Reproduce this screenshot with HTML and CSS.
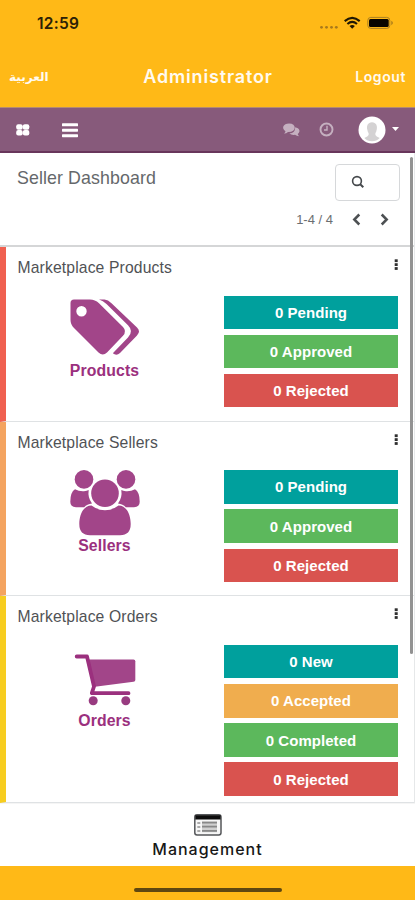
FILE: index.html
```html
<!DOCTYPE html>
<html lang="en">
<head>
<meta charset="utf-8">
<meta name="viewport" content="width=device-width">
<title>Seller Dashboard</title>
<link rel="stylesheet" href="styles.css">
</head>
<body>
<div class="app">
  <div class="status">
    <span class="time">12:59</span>
    <svg class="status-icons" width="76" height="16" viewBox="0 0 76 16">
      <g fill="#a8791c"><circle cx="2.5" cy="12.3" r="1.4"/><circle cx="7.5" cy="12.3" r="1.4"/><circle cx="12.5" cy="12.3" r="1.4"/><circle cx="17.3" cy="12.3" r="1.4"/></g>
      <g fill="none" stroke="#201804" stroke-width="2.1"><path d="M25.7 6.1Q33.2-.5 40.7 6.1"/><path d="M28.4 9Q33.2 4.8 38 9"/></g>
      <path d="M30.5 11Q33.2 8.8 35.9 11L33.2 13.8Z" fill="#201804"/>
      <rect x="48.8" y="2.4" width="22" height="11" rx="3" fill="none" stroke="#aa8023"/>
      <rect x="50" y="4" width="19.7" height="8" rx="1.5" fill="#080500"/>
      <path d="M72.3 5.8Q75.5 8 72.3 10.2Z" fill="#a87b1b"/>
    </svg>
  </div>
  <header class="header">
    <span class="lang" lang="ar" dir="rtl">العربية</span>
    <h1>Administrator</h1>
    <span class="logout">Logout</span>
  </header>
  <nav class="nav">
    <svg class="grid-icon" width="14" height="12" viewBox="0 0 14 12" fill="#fff"><rect x=".2" y=".2" width="6.5" height="5.5" rx="2"/><rect x="6.8" y=".2" width="6.5" height="5.5" rx="2"/><rect x=".2" y="6" width="6.5" height="5.5" rx="2"/><rect x="6.8" y="6" width="6.5" height="5.5" rx="2"/></svg>
    <svg class="menu-icon" width="16" height="15" viewBox="0 0 16 15" fill="#fff"><rect y=".3" width="16" height="3" rx=".6"/><rect y="5.7" width="16" height="3" rx=".6"/><rect y="11.2" width="16" height="3" rx=".6"/></svg>
    <svg class="chat-icon" width="17" height="14" viewBox="0 0 17 14" fill="#c5b0c0"><path d="M12.2 4.3C16.5 5 18 8.5 14.7 10.9Q15 12.3 16.2 13.2Q13.8 13.2 12 11.8Q8.5 12.3 6.4 10.5Q12.3 10 12.2 4.3Z"/><path d="M6 .5C14 .5 13.7 9.4 5 9.1Q3.2 10.7 1 10.6Q2.3 9.6 2.5 8.2C-1.9 5.5.2.5 6 .5Z"/></svg>
    <svg class="clock-icon" width="15" height="15" viewBox="0 0 15 15" fill="none" stroke="#c5b0c0"><circle cx="7.5" cy="7.5" r="6" stroke-width="1.9"/><path d="M8 3.8V8H5" stroke-width="1.4"/></svg>
    <svg class="avatar" width="28" height="28" viewBox="0 0 28 28"><circle cx="14" cy="14" r="13.5" fill="#fff"/><path d="M14 6.2C18.3 6.2 19.5 10 18.8 13.3Q18.3 16.2 17.4 17V19Q18 20.3 21.7 22Q18.5 25.3 14 25.3T6.3 22Q10 20.3 10.6 19V17Q9.7 16.2 9.2 13.3C8.5 10 9.7 6.2 14 6.2Z" fill="#d4d2d3"/></svg>
    <svg class="caret" width="7" height="4" viewBox="0 0 7 4" fill="#fff"><path d="M0 0H7L3.5 4Z"/></svg>
  </nav>
  <main class="content">
    <section class="panel">
      <h2>Seller Dashboard</h2>
      <div class="tools">
        <div class="search"><svg width="14" height="14" viewBox="0 0 14 14" fill="none" stroke="#45494c"><circle cx="6" cy="6" r="4.4" stroke-width="1.6"/><path d="M9.2 9.2L12.3 12.2" stroke-width="2"/></svg></div>
        <div class="pager"><span>1-4 / 4</span>
          <svg width="9" height="13" viewBox="0 0 9 13" fill="none" stroke="#4d5053" stroke-width="2.5"><path d="M7.3 1.5L2.3 6.5L7.3 11.5"/></svg>
          <svg width="9" height="13" viewBox="0 0 9 13" fill="none" stroke="#4d5053" stroke-width="2.5"><path d="M1.7 1.5L6.7 6.5L1.7 11.5"/></svg>
        </div>
      </div>
    </section>
    <section class="card red-edge">
      <div class="card-head"><h3>Marketplace Products</h3><svg class="dots" width="4" height="12" viewBox="0 0 4 12" fill="#303030"><rect x=".7" y=".3" width="3" height="2.8"/><rect x=".7" y="4.2" width="3" height="2.8"/><rect x=".7" y="8.1" width="3" height="2.8"/></svg></div>
      <div class="card-body">
        <div class="kind">
          <svg width="70" height="70" viewBox="0 0 70 70" fill="#a24589"><path fill-rule="evenodd" d="M4 .5H20Q25 .5 29 4.2L53 28Q57 32.3 53 36.7L37 53.5Q32.8 57.3 28.5 53.5L4 29Q.5 25.5.5 21V4Q.5.5 4 .5ZM11.5 7A5.2 5.2 0 1 0 11.5 17.4A5.2 5.2 0 1 0 11.5 7Z"/><path d="M29 .5H34.5Q38 .7 41.5 4.2L67 28.5Q71 32.3 67 36.5L50 54Q46.5 57.3 42.8 54.3L58 38.5Q64 32.3 58 26.3L36.5 5Q33 1.6 29 .5Z"/></svg>
          <strong>Products</strong>
        </div>
        <div class="actions"><a class="btn teal">0 Pending</a><a class="btn green">0 Approved</a><a class="btn red">0 Rejected</a></div>
      </div>
    </section>
    <section class="card orange-edge">
      <div class="card-head"><h3>Marketplace Sellers</h3><svg class="dots" width="4" height="12" viewBox="0 0 4 12" fill="#303030"><rect x=".7" y=".3" width="3" height="2.8"/><rect x=".7" y="4.2" width="3" height="2.8"/><rect x=".7" y="8.1" width="3" height="2.8"/></svg></div>
      <div class="card-body">
        <div class="kind">
          <svg width="70" height="66" viewBox="0 4 70 66" fill="#a24589"><circle cx="14" cy="13.4" r="9.3"/><circle cx="56" cy="13.4" r="9.3"/><circle cx="35" cy="27.2" r="13.8"/><path d="M5 23.2Q9 25.5 14 25.2Q17 25 18.7 24Q17.5 31.5 22 37.5Q17 38 14.2 41.2H6Q.3 41.2.3 35.8Q.3 26 5 23.2Z"/><path d="M65 23.2Q61 25.5 56 25.2Q53 25 51.3 24Q52.5 31.5 48 37.5Q53 38 55.8 41.2H64Q69.7 41.2 69.7 35.8Q69.7 26 65 23.2Z"/><path d="M21.5 39.5Q27 44.2 35 44.2T48.5 39.5C57 39.5 60.7 49.3 60.7 58Q60.7 69.2 50 69.2H20Q9.3 69.2 9.3 58C9.3 49.3 13 39.5 21.5 39.5Z"/></svg>
          <strong>Sellers</strong>
        </div>
        <div class="actions"><a class="btn teal">0 Pending</a><a class="btn green">0 Approved</a><a class="btn red">0 Rejected</a></div>
      </div>
    </section>
    <section class="card yellow-edge">
      <div class="card-head"><h3>Marketplace Orders</h3><svg class="dots" width="4" height="12" viewBox="0 0 4 12" fill="#303030"><rect x=".7" y=".3" width="3" height="2.8"/><rect x=".7" y="4.2" width="3" height="2.8"/><rect x=".7" y="8.1" width="3" height="2.8"/></svg></div>
      <div class="card-body">
        <div class="kind">
          <svg width="70" height="70" viewBox="0 2 70 70"><path d="M17 13.5H63.5Q65.3 13.5 65.3 15.3V34Q65.3 35.5 63.5 35.8L23 41Z" fill="#a24589"/><path d="M6.7 10.5H17L24 40.5L21.8 47.2H58.5" fill="none" stroke="#9b307e" stroke-width="3.8" stroke-linecap="round" stroke-linejoin="round"/><circle cx="23.2" cy="54.7" r="4.5" fill="#983b80"/><circle cx="55.8" cy="54.7" r="4.5" fill="#983b80"/></svg>
          <strong>Orders</strong>
        </div>
        <div class="actions"><a class="btn teal">0 New</a><a class="btn amber">0 Accepted</a><a class="btn green">0 Completed</a><a class="btn red">0 Rejected</a></div>
      </div>
    </section>
    <div class="scrollbar"></div>
  </main>
  <footer class="tabbar">
    <svg width="28" height="22" viewBox="0 0 28 22"><rect x=".8" y=".8" width="26.2" height="20.2" rx="2.2" fill="#f7f7f7" stroke="#55575a" stroke-width="1.5"/><path d="M1.3 1.2H26.6V5.5H1.3Z" fill="#0d0d0d"/><g fill="#aaa"><rect x="3.3" y="8" width="3" height="2"/><rect x="3.3" y="12" width="3" height="2"/><rect x="3.3" y="16" width="3" height="2"/></g><g fill="#888"><rect x="8" y="7.5" width="15" height="10.7" opacity=".35"/><rect x="8" y="7.7" width="15" height="1.8"/><rect x="8" y="11.7" width="15" height="1.8"/><rect x="8" y="16" width="15" height="1.8"/></g></svg>
    <span>Management</span>
  </footer>
  <div class="home"><div class="home-bar"></div></div>
</div>
</body>
</html>
```
FILE: styles.css
```css
* { box-sizing: border-box; }
body { margin: 0; background: #fff; font-family: "Liberation Sans", Arial, sans-serif; }
h1, h2, h3 { margin: 0; font-weight: 400; white-space: nowrap; }
svg { display: block; flex: none; overflow: visible; }
.app { width: 415px; height: 900px; display: flex; flex-direction: column; overflow: hidden; }

.status { height: 46px; flex: none; background: #ffb917; display: flex; justify-content: space-between; padding: 15px 20px 0 37px; }
.time { font: 600 15.5px/17px Inter, sans-serif; color: #2c2106; letter-spacing: .3px; }
.header { height: 61px; flex: none; background: #ffb917; color: #fffaf0; display: grid; grid-template-columns: 90px 1fr 90px; align-items: center; padding: 0 9px; font-family: Inter, sans-serif; }
.lang { justify-self: start; font: 700 12px/20px "DejaVu Sans", sans-serif; }
.header h1 { justify-self: center; font-size: 18px; font-weight: 600; letter-spacing: .85px; padding-left: 1px; }
.logout { justify-self: end; font-size: 14px; font-weight: 600; letter-spacing: .6px; }

.nav { height: 46px; flex: none; background: #875a7b; border-top: 1px solid #b58b70; border-bottom: 2px solid #68365b; display: flex; align-items: center; padding: 0 16px; }
.menu-icon { margin-left: 32px; margin-top: 1px; }
.chat-icon { margin-left: 205px; }
.clock-icon { margin-left: 18.5px; }
.avatar { margin-left: 24.5px; }
.caret { margin-left: 6px; margin-top: -2px; }

.content { height: 650px; flex: none; position: relative; border-right: 1px solid #e6e8e9; }
.panel { height: 94px; border-bottom: 2px solid #d5d6d7; display: flex; justify-content: space-between; padding: 11px 14px 0 17px; }
.panel h2 { font-size: 17.8px; line-height: 28px; color: #65686b; letter-spacing: .1px; }
.tools { display: flex; flex-direction: column; align-items: flex-end; }
.search { width: 65px; height: 37px; border: 1px solid #d6d8da; border-radius: 4px; padding: 10px 0 0 15px; }
.pager { display: flex; align-items: center; height: 37px; padding-right: 11px; color: #6b6e71; font-size: 13px; }
.pager svg:first-of-type { margin: 0 19px 0 19px; }

.card { height: 174.7px; border-left: 6px solid; border-bottom: 1.5px solid #dfe2e4; padding: 9px 16px 0 11.5px; }
.red-edge { border-left-color: #f06050; }
.orange-edge { border-left-color: #f4a460; }
.yellow-edge { border-left-color: #f7cd1f; height: 206.6px; }
.card-head { display: flex; justify-content: space-between; height: 39.5px; }
.card-head h3 { font-size: 15.7px; line-height: 23.4px; color: #505255; letter-spacing: .14px; }
.dots { margin-top: 3px; }
.card-body { display: flex; justify-content: space-between; }
.kind { width: 174px; display: flex; flex-direction: column; align-items: center; padding-top: 3.5px; }
.kind strong { font-size: 15.8px; line-height: 18px; color: #9b307e; margin-top: -6.3px; letter-spacing: .1px; }
.red-edge .kind strong { margin-top: -7.3px; }
.orange-edge .kind { padding-top: 0; }
.orange-edge .kind strong { margin-top: 1px; }
.actions { width: 174px; flex: none; display: flex; flex-direction: column; gap: 5.6px; }
.btn { height: 33.6px; display: flex; align-items: center; justify-content: center; color: #fff; font-size: 15px; font-weight: 700; letter-spacing: .05px; }
.teal { background: #00a09d; }
.green { background: #5cb85c; }
.red { background: #d9534f; }
.amber { background: #f0ad4e; }
.scrollbar { position: absolute; right: 1.5px; top: 4px; width: 3px; height: 497px; border-radius: 2px; background: #929292; }

.tabbar { height: 63px; flex: none; background: #fff; border-top: 1px solid #f5f5f5; display: flex; flex-direction: column; align-items: center; padding-top: 10px; }
.tabbar span { font: 500 16px/22px Inter, sans-serif; color: #171717; letter-spacing: 1px; margin-top: 2px; }
.home { height: 34px; flex: none; background: #ffb917; display: flex; justify-content: center; padding-top: 22px; }
.home-bar { width: 148px; height: 4px; border-radius: 2px; background: #5f4710; }
```
